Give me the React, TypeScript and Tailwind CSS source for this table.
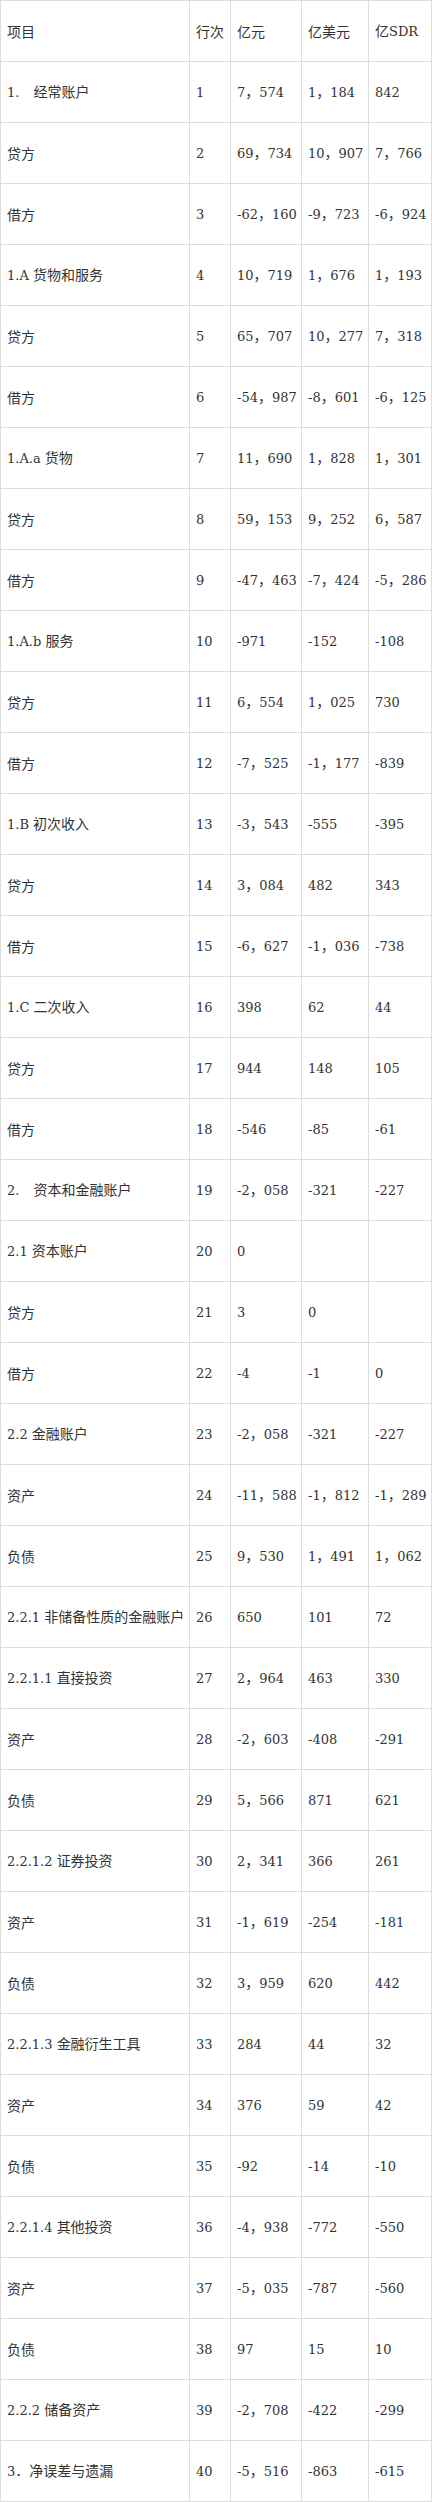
const rows: string[][] = [
  ["1.　经常账户", "1", "7，574", "1，184", "842"],
  ["贷方", "2", "69，734", "10，907", "7，766"],
  ["借方", "3", "-62，160", "-9，723", "-6，924"],
  ["1.A 货物和服务", "4", "10，719", "1，676", "1，193"],
  ["贷方", "5", "65，707", "10，277", "7，318"],
  ["借方", "6", "-54，987", "-8，601", "-6，125"],
  ["1.A.a 货物", "7", "11，690", "1，828", "1，301"],
  ["贷方", "8", "59，153", "9，252", "6，587"],
  ["借方", "9", "-47，463", "-7，424", "-5，286"],
  ["1.A.b 服务", "10", "-971", "-152", "-108"],
  ["贷方", "11", "6，554", "1，025", "730"],
  ["借方", "12", "-7，525", "-1，177", "-839"],
  ["1.B 初次收入", "13", "-3，543", "-555", "-395"],
  ["贷方", "14", "3，084", "482", "343"],
  ["借方", "15", "-6，627", "-1，036", "-738"],
  ["1.C 二次收入", "16", "398", "62", "44"],
  ["贷方", "17", "944", "148", "105"],
  ["借方", "18", "-546", "-85", "-61"],
  ["2.　资本和金融账户", "19", "-2，058", "-321", "-227"],
  ["2.1 资本账户", "20", "0", "", ""],
  ["贷方", "21", "3", "0", ""],
  ["借方", "22", "-4", "-1", "0"],
  ["2.2 金融账户", "23", "-2，058", "-321", "-227"],
  ["资产", "24", "-11，588", "-1，812", "-1，289"],
  ["负债", "25", "9，530", "1，491", "1，062"],
  ["2.2.1 非储备性质的金融账户", "26", "650", "101", "72"],
  ["2.2.1.1 直接投资", "27", "2，964", "463", "330"],
  ["资产", "28", "-2，603", "-408", "-291"],
  ["负债", "29", "5，566", "871", "621"],
  ["2.2.1.2 证券投资", "30", "2，341", "366", "261"],
  ["资产", "31", "-1，619", "-254", "-181"],
  ["负债", "32", "3，959", "620", "442"],
  ["2.2.1.3 金融衍生工具", "33", "284", "44", "32"],
  ["资产", "34", "376", "59", "42"],
  ["负债", "35", "-92", "-14", "-10"],
  ["2.2.1.4 其他投资", "36", "-4，938", "-772", "-550"],
  ["资产", "37", "-5，035", "-787", "-560"],
  ["负债", "38", "97", "15", "10"],
  ["2.2.2 储备资产", "39", "-2，708", "-422", "-299"],
  ["3．净误差与遗漏", "40", "-5，516", "-863", "-615"],
]

const head = ["项目", "行次", "亿元", "亿美元", "亿SDR"]

const cell = "border border-[#dcdcdc] px-[6px] align-middle whitespace-nowrap text-left font-normal"

// latin runs get the serif face, CJK runs stay in the sans CJK face
function Text({ value }: { value: string }) {
  const parts = value.match(/[\u3000-\u9fff\uff00-\uffef]+|[^\u3000-\u9fff\uff00-\uffef]+/g) || []
  return (
    <>
      {parts.map((p, i) =>
        /[\u3000-\u9fff\uff00-\uffef]/.test(p) ? (
          <span key={i}>{p}</span>
        ) : (
          <span key={i} className="font-['DejaVu_Serif',serif] text-[13px]">
            {p}
          </span>
        )
      )}
    </>
  )
}

export default function App() {
  return (
    <div className="bg-white w-[432px]">
      <table className="w-[432px] table-fixed border-collapse text-[14px] leading-[20px] text-[#333] font-['Noto_Sans_CJK_SC',sans-serif]">
        <colgroup>
          <col className="w-[189px]" />
          <col className="w-[41px]" />
          <col className="w-[71px]" />
          <col className="w-[67px]" />
          <col />
        </colgroup>
        <thead>
          <tr className="h-[61px]">
            {head.map((h) => (
              <th key={h} className={cell}>
                <Text value={h} />
              </th>
            ))}
          </tr>
        </thead>
        <tbody>
          {rows.map((r, i) => (
            <tr key={i} className="h-[61px]">
              {r.map((v, j) => (
                <td key={j} className={cell}>
                  <Text value={v} />
                </td>
              ))}
            </tr>
          ))}
        </tbody>
      </table>
    </div>
  )
}
